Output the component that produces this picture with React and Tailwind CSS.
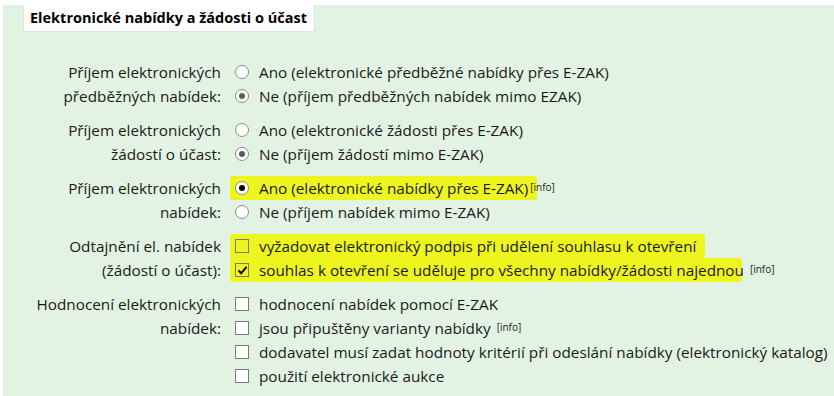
import React from "react";

const Radio = ({ checked, dark }) => (
  <span className="relative inline-flex w-[14px] h-[14px] rounded-full border border-[#8a8a8a] bg-white items-center justify-center shrink-0">
    {checked && (
      <span className={`w-[6px] h-[6px] rounded-full ${dark ? "bg-black" : "bg-[#5a5a5a]"}`} />
    )}
  </span>
);

const Check = ({ checked, clear }) => (
  <span
    className={`relative inline-flex w-[14px] h-[14px] border border-[#7a7a7a] items-center justify-center shrink-0 ${
      clear ? "bg-transparent" : "bg-white"
    }`}
  >
    {checked && (
      <svg width="11" height="11" viewBox="0 0 11 11">
        <path d="M1.5 5.5 L4.2 8.3 L9.5 1.8" fill="none" stroke="#000" strokeWidth="2" />
      </svg>
    )}
  </span>
);

const Info = () => <sup className="text-[10px] ml-[2px] relative -top-[3px]">[info]</sup>;

const Opt = ({ ctrl, children, hl }) => (
  <div className="relative h-[24px] flex items-center gap-[10px]">
    {hl && <span className={`absolute -left-[5px] top-0 h-[24px] bg-[#eef51e] rounded-[3px] ${hl}`} />}
    {ctrl}
    <span className="relative whitespace-nowrap">{children}</span>
  </div>
);

const Group = ({ label, children }) => (
  <div className="flex">
    <div className="w-[218px] shrink-0 text-right leading-[24px]">
      {label.map((l, i) => (
        <div key={i} className="whitespace-nowrap">{l}</div>
      ))}
    </div>
    <div className="pl-[14px] flex flex-col">{children}</div>
  </div>
);

export default function App() {
  return (
    <div className="w-[834px] h-[396px] bg-white pt-[5px] overflow-hidden" style={{ fontFamily: "'Open Sans', 'DejaVu Sans', sans-serif" }}>
      <div className="ml-[3px] h-full bg-[#e3f3e3] text-[15.3px] text-[#1a1a1a]">
        <div className="pl-[20px]">
          <div className="inline-block bg-white border border-[#d8e8d8] border-t-0 pl-[6px] pr-[7px] h-[27px] leading-[26px] font-bold text-[14.5px] text-black">
            Elektronické nabídky a žádosti o účast
          </div>
        </div>
        <div className="flex flex-col gap-[10px] mt-[28px]">
          <Group label={["Příjem elektronických", "předběžných nabídek:"]}>
            <Opt ctrl={<Radio />}>Ano (elektronické předběžné nabídky přes E-ZAK)</Opt>
            <Opt ctrl={<Radio checked />}>Ne (příjem předběžných nabídek mimo EZAK)</Opt>
          </Group>
          <Group label={["Příjem elektronických", "žádostí o účast:"]}>
            <Opt ctrl={<Radio />}>Ano (elektronické žádosti přes E-ZAK)</Opt>
            <Opt ctrl={<Radio checked />}>Ne (příjem žádostí mimo E-ZAK)</Opt>
          </Group>
          <Group label={["Příjem elektronických", "nabídek:"]}>
            <Opt hl="w-[307px]" ctrl={<Radio checked dark />}>
              Ano (elektronické nabídky přes E-ZAK)<Info />
            </Opt>
            <Opt ctrl={<Radio />}>Ne (příjem nabídek mimo E-ZAK)</Opt>
          </Group>
          <Group label={["Odtajnění el. nabídek", "(žádostí o účast):"]}>
            <Opt hl="w-[475px]" ctrl={<Check clear />}>
              vyžadovat elektronický podpis při udělení souhlasu k otevření
            </Opt>
            <Opt hl="w-[512px]" ctrl={<Check checked clear />}>
              souhlas k otevření se uděluje pro všechny nabídky/žádosti najednou <Info />
            </Opt>
          </Group>
          <Group label={["Hodnocení elektronických", "nabídek:"]}>
            <Opt ctrl={<Check />}>hodnocení nabídek pomocí E-ZAK</Opt>
            <Opt ctrl={<Check />}>
              jsou připuštěny varianty nabídky <Info />
            </Opt>
            <Opt ctrl={<Check />}>dodavatel musí zadat hodnoty kritérií při odeslání nabídky (elektronický katalog)</Opt>
            <Opt ctrl={<Check />}>použití elektronické aukce</Opt>
          </Group>
        </div>
      </div>
    </div>
  );
}
